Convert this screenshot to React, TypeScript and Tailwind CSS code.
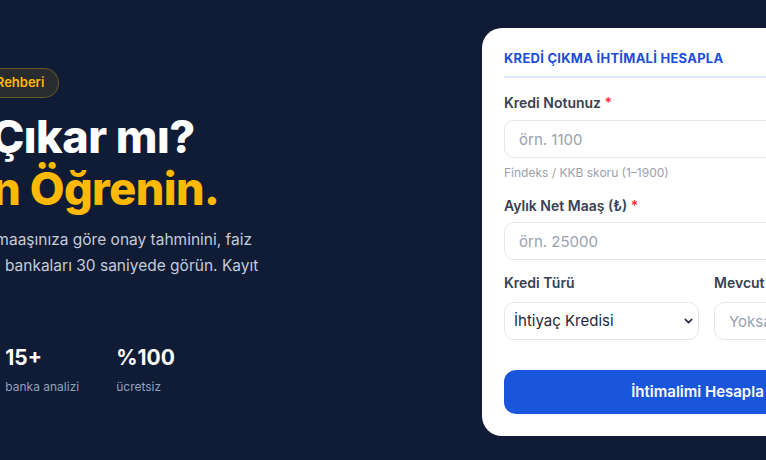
import { ArrowRight, ChevronDown, Sparkles } from "lucide-react"

const stats = [
  { value: "%95", label: "doğru sonuç oranı" },
  { value: "15+", label: "banka analizi" },
  { value: "%100", label: "ücretsiz" },
]

export default function App() {
  return (
    <div className="h-[460px] w-full overflow-hidden bg-[#101c35] font-['Inter',sans-serif]">
      <div className="-ml-[135px] flex w-[1100px] items-start gap-[57px] pt-[28px]">
        <div className="w-[560px] shrink-0 pt-[40px]">
          <span className="inline-flex h-[30px] items-center gap-1.5 rounded-full border border-amber-400/30 bg-amber-400/10 pl-4 pr-3.5 text-[13px] font-semibold text-amber-400">
            <Sparkles aria-hidden="true" className="size-4" />
            Ücretsiz Kredi Rehberi
          </span>

          <h1 className="mt-[13px] text-[45px] font-extrabold leading-[52px] tracking-[-0.012em] text-white">
            Kredi Çıkar mı?
            <span className="block text-amber-400">Hemen Öğrenin.</span>
          </h1>

          <p className="mt-3 max-w-[430px] pl-[2px] text-[15.5px] leading-[26px] text-[#c3cbd9]">
            Kredi notunuz ve maaşınıza göre onay tahminini, faiz oranınızı ve
            uygun bankaları 30 saniyede görün. Kayıt gerektirmez.
          </p>

          <div className="mt-[39px] flex gap-[37px]">
            {stats.map((stat) => (
              <div key={stat.label}>
                <p className="text-[21px] font-bold leading-7 text-white">
                  {stat.value}
                </p>
                <p className="mt-[7px] text-xs leading-4 text-slate-400">
                  {stat.label}
                </p>
              </div>
            ))}
          </div>
        </div>

        <form className="w-[449px] shrink-0 rounded-[20px] bg-white px-[22px] pb-[22px] pt-[22px]">
          <p className="border-b-2 border-[#e0e9f7] pb-[10px] text-[13px] font-bold leading-4 tracking-[0.02em] text-[#1d4ed8]">
            KREDİ ÇIKMA İHTİMALİ HESAPLA
          </p>

          <label className="mt-[15px] block text-sm font-semibold leading-5 text-gray-700">
            Kredi Notunuz <span className="text-red-500">*</span>
          </label>
          <input
            placeholder="örn. 1100"
            className="mt-[7px] h-[38px] w-full rounded-[10px] border border-gray-200 px-3.5 text-[15px] text-gray-800 outline-none placeholder:text-gray-400"
          />
          <p className="mt-[7px] text-xs leading-4 text-gray-400">
            Findeks / KKB skoru (1–1900)
          </p>

          <label className="mt-[15px] block text-sm font-semibold leading-5 text-gray-700">
            Aylık Net Maaş (₺) <span className="text-red-500">*</span>
          </label>
          <input
            placeholder="örn. 25000"
            className="mt-1.5 h-[38px] w-full rounded-[10px] border border-gray-200 px-3.5 text-[15px] text-gray-800 outline-none placeholder:text-gray-400"
          />

          <div className="mt-[13px] grid grid-cols-2 gap-[15px]">
            <div>
              <label className="block text-sm font-semibold leading-5 text-gray-700">
                Kredi Türü
              </label>
              <div className="relative mt-[9px]">
                <select className="h-[38px] w-full appearance-none rounded-[10px] border border-gray-200 bg-white pl-[9px] pr-8 text-[15px] text-gray-800 outline-none">
                  <option>İhtiyaç Kredisi</option>
                  <option>Konut Kredisi</option>
                  <option>Taşıt Kredisi</option>
                </select>
                <ChevronDown
                  aria-hidden="true"
                  strokeWidth={2.75}
                  className="pointer-events-none absolute right-[4px] top-1/2 size-[13px] -translate-y-1/2 text-gray-800"
                />
              </div>
            </div>
            <div>
              <label className="block text-sm font-semibold leading-5 text-gray-700">
                Mevcut Taksit (₺)
              </label>
              <input
                placeholder="Yoksa 0"
                className="mt-[9px] h-[38px] w-full rounded-[10px] border border-gray-200 px-3.5 text-[15px] text-gray-800 outline-none placeholder:text-gray-400"
              />
            </div>
          </div>

          <button
            type="button"
            className="mt-[30px] flex h-[44px] w-full items-center justify-center gap-1 rounded-xl bg-[#1a56db] text-[15px] font-semibold text-white"
          >
            İhtimalimi Hesapla
            <ArrowRight aria-hidden="true" className="size-3.5" />
          </button>
        </form>
      </div>
    </div>
  )
}
